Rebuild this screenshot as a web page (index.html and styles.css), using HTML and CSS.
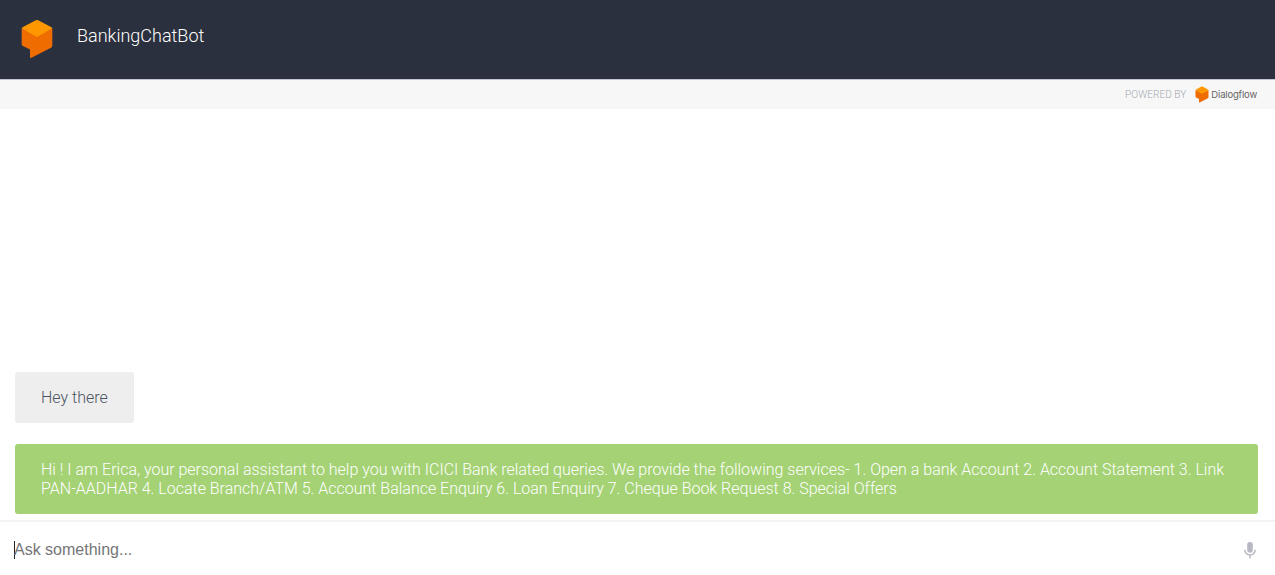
FILE: index.html
```html
<!DOCTYPE html>
<html lang="en">
<head>
<meta charset="utf-8">
<title>BankingChatBot</title>
<link rel="stylesheet" href="styles.css">
</head>
<body>
<header class="header">
  <svg class="agent-logo" viewBox="0 0 32 40">
    <path fill="#ef6c00" d="M.7 9.500 16 17 31.300 9.500V26.500Q31.300 28 30 28.700L10.500 38.800Q9 39.500 9 38V30.500L2 27Q.7 26.300 .7 25Z"/>
    <path fill="#ff9800" d="M.7 9.600Q.8 8.700 2 8.100L14.800 1.300Q16 .7 17.200 1.300L30 8.100Q31.200 8.700 31.300 9.600L16 18Z"/>
  </svg>
  <h1 class="title">BankingChatBot</h1>
</header>
<div class="powered">
  <span class="powered-label">POWERED BY</span>
  <svg class="brand-logo" viewBox="0 0 32 40">
    <path fill="#ef6c00" d="M.7 9.500 16 17 31.300 9.500V26.500Q31.300 28 30 28.700L10.500 38.800Q9 39.500 9 38V30.500L2 27Q.7 26.300 .7 25Z"/>
    <path fill="#ff9800" d="M.7 9.600Q.8 8.700 2 8.100L14.800 1.300Q16 .7 17.200 1.300L30 8.100Q31.200 8.700 31.300 9.600L16 18Z"/>
  </svg>
  <span class="brand-name">Dialogflow</span>
</div>
<main class="messages">
  <div class="bubble user">Hey there</div>
  <div class="bubble bot">Hi ! I am Erica, your personal assistant to help you with ICICI Bank related queries. We provide the following services- 1. Open a bank Account 2. Account Statement 3. Link PAN-AADHAR 4. Locate Branch/ATM 5. Account Balance Enquiry 6. Loan Enquiry 7. Cheque Book Request 8. Special Offers</div>
</main>
<footer class="composer">
  <span class="caret"></span>
  <span class="placeholder">Ask something...</span>
  <svg class="mic" viewBox="0 0 12 17">
    <rect x="3.200" y="0" width="5.600" height="10.800" rx="2.800" fill="#b7b8c4"/>
    <path d="M.8 7.800a5.200 5.200 0 0 0 10.400 0M6 13v3.500" fill="none" stroke="#b7b8c4" stroke-width="1.500"/>
  </svg>
</footer>
</body>
</html>
```
FILE: styles.css
```css
* {
  box-sizing: border-box;
}

body {
  margin: 0;
  height: 575px;
  display: flex;
  flex-direction: column;
  overflow: hidden;
  background: #fff;
  font-family: Roboto, sans-serif;
  font-weight: 300;
}

.header {
  height: 79px;
  flex: none;
  display: flex;
  align-items: flex-start;
  padding: 19px 21px 0;
  background: #2b303e;
}

.agent-logo {
  width: 32px;
  height: 40px;
}

.title {
  margin: 5px 0 0 24px;
  font-size: 18px;
  line-height: 24px;
  font-weight: 300;
  color: #fff;
}

.powered {
  height: 30px;
  flex: none;
  display: flex;
  align-items: center;
  justify-content: flex-end;
  padding-right: 18px;
  border-top: 1px solid #c5c7d0;
  background: #f7f7f7;
}

.powered-label {
  font-size: 10px;
  letter-spacing: 0.08px;
  color: #a3a7b2;
}

.brand-logo {
  width: 14px;
  height: 17px;
  margin: 0 2px 0 9px;
}

.brand-name {
  font-family: Inter, sans-serif;
  font-size: 9.500px;
  letter-spacing: -0.180px;
  font-weight: 400;
  color: #666;
}

.messages {
  flex: 1;
  display: flex;
  flex-direction: column;
  justify-content: flex-end;
  align-items: flex-start;
  gap: 21px;
  padding: 0 16px 6px 15px;
}

.bubble {
  padding: 16px 26px;
  border-radius: 3px;
  font-size: 16px;
  line-height: 19px;
}

.user {
  background: #eee;
  color: #4a5360;
}

.bot {
  width: 1243px;
  height: 70px;
  letter-spacing: -0.005px;
  background: #a4d274;
  color: #fff;
}

.composer {
  height: 55px;
  flex: none;
  display: flex;
  align-items: center;
  padding: 3px 19px 0 14px;
  border-top: 2px solid #f3f3f5;
}

.caret {
  width: 1px;
  height: 18px;
  margin-right: -1px;
  background: #222;
}

.placeholder {
  flex: 1;
  font-family: "Liberation Sans", Arial, sans-serif;
  font-size: 16px;
  line-height: 20px;
  font-weight: 400;
  color: #757575;
}

.mic {
  width: 12px;
  height: 17px;
}
```
